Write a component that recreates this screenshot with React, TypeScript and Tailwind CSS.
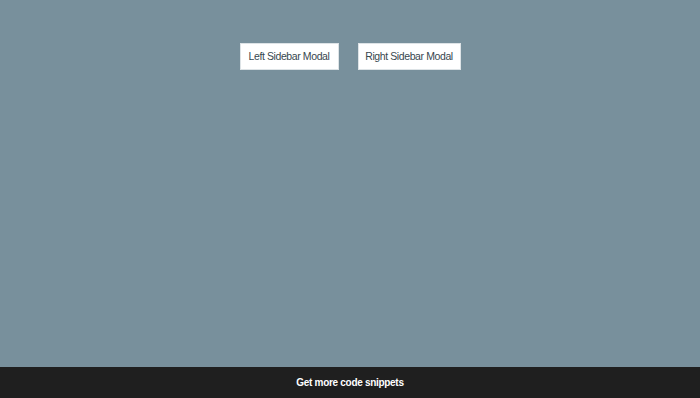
export default function App() {
  return (
    <div
      className="flex flex-col h-[398px] bg-[#78909c]"
      style={{ fontFamily: '"Liberation Sans", Arial, sans-serif' }}
    >
      <div className="flex-1 flex justify-center items-start gap-[19px] pt-[43px]">
        <button className="h-[27px] w-[99px] whitespace-nowrap bg-white border border-[#dde3e6] text-[10.5px] tracking-[-0.4px] text-[#37474f]">
          Left Sidebar Modal
        </button>
        <button className="h-[27px] w-[103px] whitespace-nowrap bg-white border border-[#dde3e6] text-[10.5px] tracking-[-0.4px] text-[#37474f]">
          Right Sidebar Modal
        </button>
      </div>
      <div className="h-[31px] flex items-center justify-center bg-[#1f1f1f]">
        <a className="text-[10px] font-bold tracking-[-0.3px] text-white">Get more code snippets</a>
      </div>
    </div>
  );
}
